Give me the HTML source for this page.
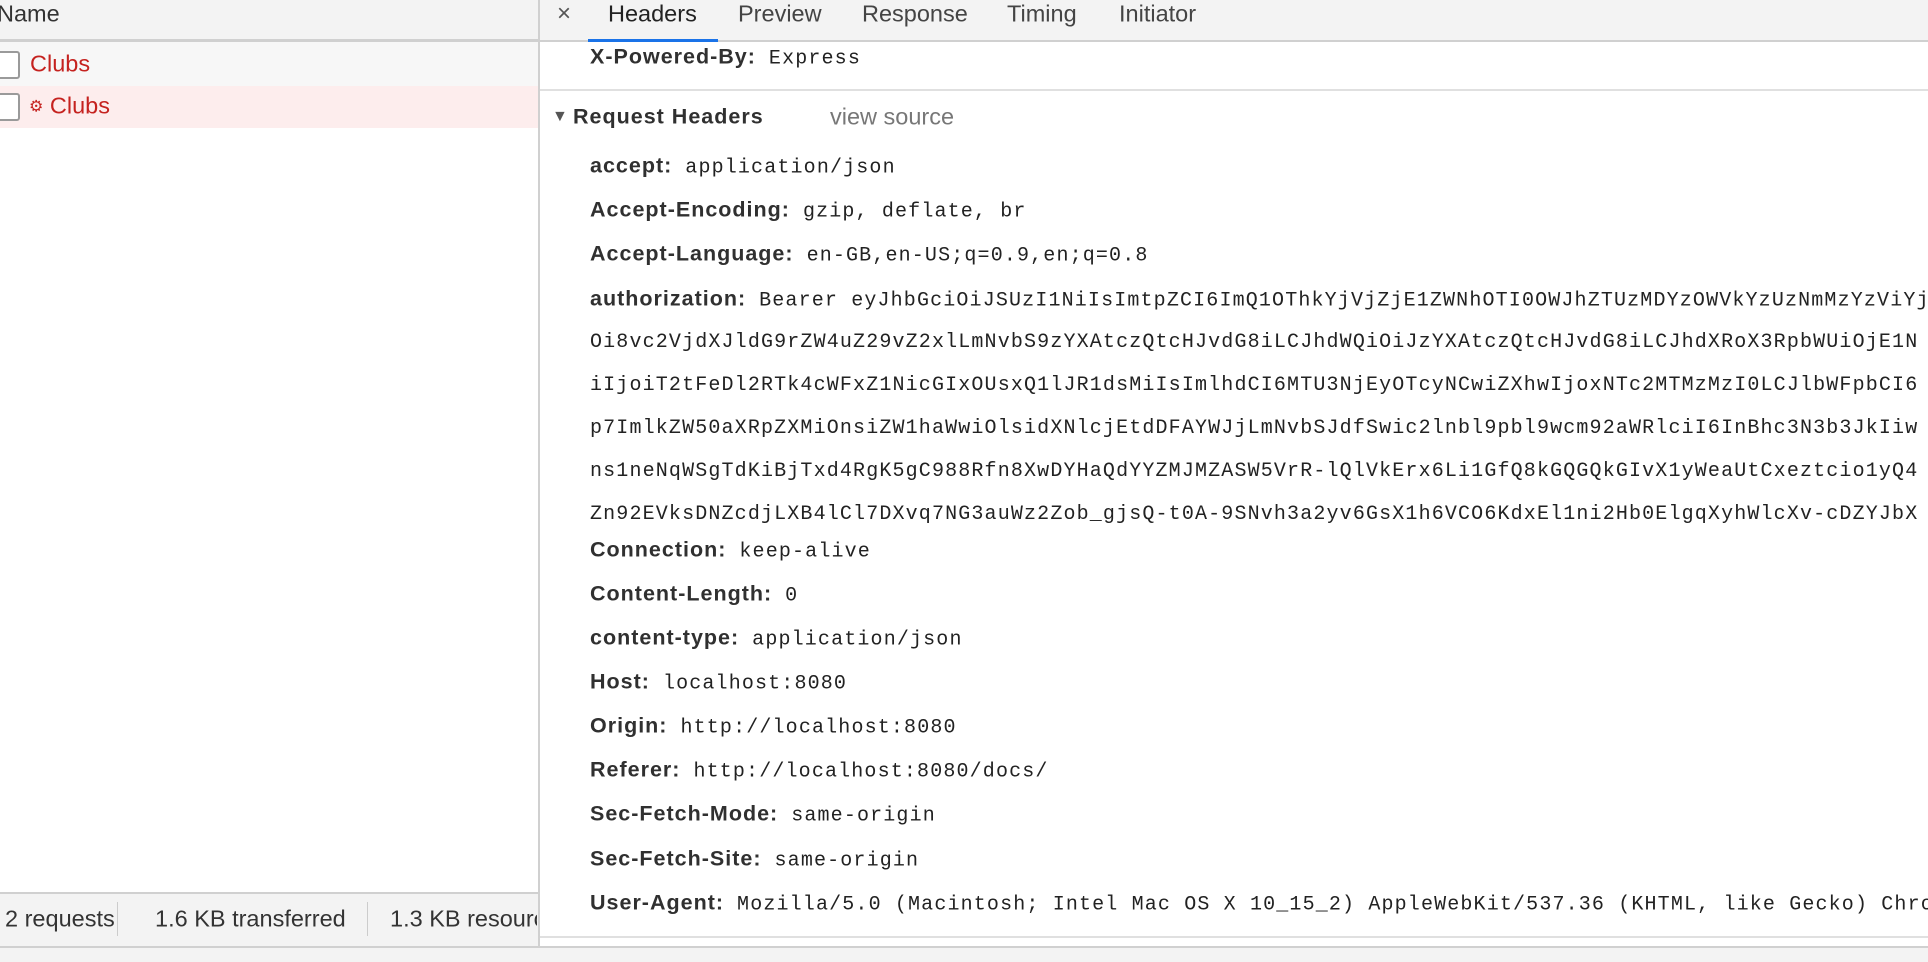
<!DOCTYPE html>
<html><head><meta charset="utf-8"><style>
*{margin:0;padding:0;box-sizing:border-box}
html,body{width:1928px;height:962px;overflow:hidden}
body{background:#fff;font-family:"Liberation Sans",sans-serif;position:relative;color:#333}
.a{position:absolute;white-space:nowrap}
.lbl{font-weight:bold;font-size:21.5px;letter-spacing:1px;color:#303030;margin-right:13px}
.mono{font-family:"Liberation Mono",monospace;font-size:20px;letter-spacing:1.15px;color:#222}
.row{position:absolute;left:50px;white-space:nowrap;transform:translateY(-50%);line-height:26px}
.tab{position:absolute;top:14px;transform:translateY(-50%);font-size:23.5px;color:#444}
#rp{position:absolute;left:540px;top:0;width:1388px;height:962px;overflow:hidden}
#lp{position:absolute;left:0;top:0;width:539px;height:962px;overflow:hidden}
</style></head><body>
<div id="lp">
<div class="a" style="left:0;top:0;width:539px;height:42px;background:#f3f3f3;border-bottom:3px solid #d0d0d0"></div>
<div class="a" style="left:-3px;top:14px;transform:translateY(-50%);font-size:23.5px;color:#333">Name</div>
<div class="a" style="left:0;top:42px;width:539px;height:44px;background:#f7f7f7"></div>
<div class="a" style="left:0;top:86px;width:539px;height:42px;background:#fdeded"></div>
<div class="a" style="left:-6px;top:51px;width:26px;height:28px;background:#fff;border:2px solid #9a9a9a;border-radius:3px"></div>
<div class="a" style="left:-6px;top:93px;width:26px;height:28px;background:#fff;border:2px solid #9a9a9a;border-radius:3px"></div>
<div class="a" style="left:30px;top:64px;transform:translateY(-50%);font-size:23.5px;color:#c5221f">Clubs</div>
<div class="a" style="left:29px;top:106px;transform:translateY(-50%);font-size:23.5px;color:#c5221f"><span style="font-size:16px;position:relative;top:-2px">⚙</span> Clubs</div>
<div class="a" style="left:0;top:892px;width:539px;height:55px;background:#f3f3f3;border-top:2px solid #d0d0d0"></div>
<div class="a" style="left:5px;top:919px;transform:translateY(-50%);font-size:23.5px;color:#333">2 requests</div>
<div class="a" style="left:117px;top:902px;width:1px;height:34px;background:#ccc"></div>
<div class="a" style="left:155px;top:919px;transform:translateY(-50%);font-size:23.5px;color:#333">1.6 KB transferred</div>
<div class="a" style="left:367px;top:902px;width:1px;height:34px;background:#ccc"></div>
<div class="a" style="left:390px;top:919px;transform:translateY(-50%);font-size:23.5px;color:#333;width:147px;overflow:hidden">1.3 KB resources</div>
</div>
<div class="a" style="left:538px;top:0;width:2px;height:947px;background:#d0d0d0"></div>
<div id="rp">
<div class="a" style="left:0;top:0;width:1388px;height:42px;background:#f3f3f3;border-bottom:2px solid #d0d0d0"></div>
<div class="tab" style="left:17px;font-size:24px;color:#555">×</div>
<div class="tab" style="left:68px;color:#222">Headers</div>
<div class="a" style="left:48px;top:39px;width:130px;height:3px;background:#1a73e8"></div>
<div class="tab" style="left:198px">Preview</div>
<div class="tab" style="left:322px">Response</div>
<div class="tab" style="left:467px">Timing</div>
<div class="tab" style="left:579px">Initiator</div>
<div class="row" style="top:58px"><span class="lbl">X-Powered-By:</span><span class="mono">Express</span></div>
<div class="a" style="left:0;top:89px;width:1388px;height:2px;background:#e0e0e0"></div>
<div class="a" style="left:12px;top:117px;transform:translateY(-50%);font-size:16px;color:#555">▼</div>
<div class="a lbl" style="left:33px;top:117px;transform:translateY(-50%)">Request Headers</div>
<div class="a" style="left:290px;top:117px;transform:translateY(-50%);font-size:23.5px;color:#777">view source</div>
<div class="row" style="top:167px"><span class="lbl">accept:</span><span class="mono">application/json</span></div>
<div class="row" style="top:211px"><span class="lbl">Accept-Encoding:</span><span class="mono">gzip, deflate, br</span></div>
<div class="row" style="top:255px"><span class="lbl">Accept-Language:</span><span class="mono">en-GB,en-US;q=0.9,en;q=0.8</span></div>
<div class="row" style="top:300px"><span class="lbl">authorization:</span><span class="mono">Bearer eyJhbGciOiJSUzI1NiIsImtpZCI6ImQ1OThkYjVjZjE1ZWNhOTI0OWJhZTUzMDYzOWVkYzUzNmMzYzViYjAiLCJ0eXAiOiJKV1QifQ</span></div>
<div class="row mono" style="top:343px">Oi8vc2VjdXJldG9rZW4uZ29vZ2xlLmNvbS9zYXAtczQtcHJvdG8iLCJhdWQiOiJzYXAtczQtcHJvdG8iLCJhdXRoX3RpbWUiOjE1N</div>
<div class="row mono" style="top:386px">iIjoiT2tFeDl2RTk4cWFxZ1NicGIxOUsxQ1lJR1dsMiIsImlhdCI6MTU3NjEyOTcyNCwiZXhwIjoxNTc2MTMzMzI0LCJlbWFpbCI6</div>
<div class="row mono" style="top:429px">p7ImlkZW50aXRpZXMiOnsiZW1haWwiOlsidXNlcjEtdDFAYWJjLmNvbSJdfSwic2lnbl9pbl9wcm92aWRlciI6InBhc3N3b3JkIiw</div>
<div class="row mono" style="top:472px">ns1neNqWSgTdKiBjTxd4RgK5gC988Rfn8XwDYHaQdYYZMJMZASW5VrR-lQlVkErx6Li1GfQ8kGQGQkGIvX1yWeaUtCxeztcio1yQ4</div>
<div class="row mono" style="top:515px">Zn92EVksDNZcdjLXB4lCl7DXvq7NG3auWz2Zob_gjsQ-t0A-9SNvh3a2yv6GsX1h6VCO6KdxEl1ni2Hb0ElgqXyhWlcXv-cDZYJbX</div>
<div class="row" style="top:551px"><span class="lbl">Connection:</span><span class="mono">keep-alive</span></div>
<div class="row" style="top:595px"><span class="lbl">Content-Length:</span><span class="mono">0</span></div>
<div class="row" style="top:639px"><span class="lbl">content-type:</span><span class="mono">application/json</span></div>
<div class="row" style="top:683px"><span class="lbl">Host:</span><span class="mono">localhost:8080</span></div>
<div class="row" style="top:727px"><span class="lbl">Origin:</span><span class="mono">http://localhost:8080</span></div>
<div class="row" style="top:771px"><span class="lbl">Referer:</span><span class="mono">http://localhost:8080/docs/</span></div>
<div class="row" style="top:815px"><span class="lbl">Sec-Fetch-Mode:</span><span class="mono">same-origin</span></div>
<div class="row" style="top:860px"><span class="lbl">Sec-Fetch-Site:</span><span class="mono">same-origin</span></div>
<div class="row" style="top:904px"><span class="lbl">User-Agent:</span><span class="mono">Mozilla/5.0 (Macintosh; Intel Mac OS X 10_15_2) AppleWebKit/537.36 (KHTML, like Gecko) Chrome/79.0</span></div>
<div class="a" style="left:0;top:936px;width:1388px;height:2px;background:#e0e0e0"></div>
</div>
<div class="a" style="left:0;top:946px;width:1928px;height:16px;background:#f3f3f3;border-top:2px solid #d0d0d0"></div>
</body></html>
